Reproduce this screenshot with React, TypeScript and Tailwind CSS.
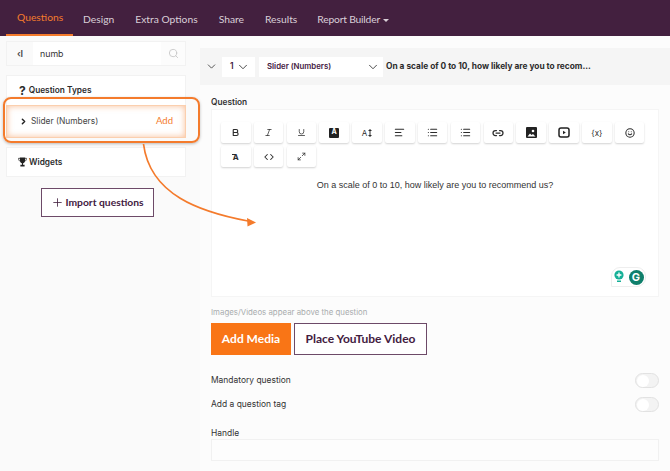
import React from "react";
import { ChevronDown, ChevronRight, Search, Bold, Italic, Underline, AlignLeft, List, Link2, Maximize2, Smile, Code, Plus } from "lucide-react";

const navItems = ["Design", "Extra Options", "Share", "Results"];

function Tool({ children }: { children: React.ReactNode }) {
  return (
    <div className="w-[29.5px] h-[21px] bg-white rounded-[2px] shadow-[0_1px_2px_rgba(0,0,0,0.18)] flex items-center justify-center text-[#2c2c2c]">
      {children}
    </div>
  );
}

function Toggle() {
  return (
    <div className="w-[24px] h-[15px] rounded-full bg-[#f3f3f3] border border-[#e2e2e2] flex items-center px-[1px]">
      <div className="w-[12px] h-[12px] rounded-full bg-white" />
    </div>
  );
}

export default function App() {
  const outfit = "font-['Lato','Noto_Sans',sans-serif]";
  return (
    <div className="relative w-[670px] h-[471px] overflow-hidden bg-white font-['Inter','Liberation_Sans',sans-serif] text-[#333]">
      <nav className={`h-[36px] bg-[#43203f] flex items-stretch pl-[6px] text-[10.3px] ${outfit}`}>
        <div className="px-[11px] pt-[2px] flex items-center text-[#f47b2c] border-b-2 border-[#f47b2c] w-[67px] whitespace-nowrap">Questions</div>
        <div className="flex items-center text-[#d9cfd8] gap-[21px] ml-[10px] pt-[4px]">
          {navItems.map((n) => <span key={n}>{n}</span>)}
          <span className="-ml-[1px] flex items-center gap-[3px] tracking-[-0.2px]">Report Builder<span className="w-0 h-0 border-x-[3px] border-x-transparent border-t-[3px] border-t-[#d9cfd8]" /></span>
        </div>
      </nav>

      <div className="flex h-[435px]">
        <aside className="w-[200px] shrink-0 bg-[#fafafa] px-[6px] pt-[5px]">
          <div className="h-[25px] w-[180px] flex bg-white border border-[#f2f2f2] items-center">
            <div className="w-[26px] h-full flex items-center justify-center text-[9px] font-semibold text-[#444] bg-[#fafafa]">‹I</div>
            <div className="flex-1 pl-[7px] text-[8.8px] text-[#333]">numb</div>
            <div className="w-[24px] h-full flex items-center justify-center bg-[#fcfcfc]"><Search size={11} className="text-[#c8c8c8]" /></div>
          </div>

          <div className="mt-[9px] w-[180px] bg-white border-t border-x border-[#f2f2f2]">
            <div className="h-[29px] pl-[12px] flex items-center gap-[3px] text-[8.3px] font-semibold text-[#2c2c2c]">
              <span className="text-[12px] font-bold leading-none">?</span>Question Types
            </div>
            <div className="h-[33px] -mx-px flex items-center pl-[12px] pr-[12px] bg-white border border-[#fbcfae] shadow-[inset_0_0_6px_rgba(244,123,44,0.5)] text-[8.4px] text-[#444]">
              <ChevronRight size={9} strokeWidth={4} className="text-[#222]" />
              <span className="ml-[3px] flex-1">Slider (Numbers)</span>
              <span className={`text-[#f47b2c] text-[9.5px] ${outfit}`}>Add</span>
            </div>
          </div>

          <div className="mt-[9px] w-[180px] h-[30px] bg-white border border-[#f2f2f2] pl-[11px] flex items-center gap-[2px] text-[8.3px] font-semibold text-[#2c2c2c]">
            <svg width="9" height="10" viewBox="0 0 9 10" fill="none">
              <path d="M2 0.5 H7 V3.5 C7 5.2 6 6.2 5 6.4 V7.8 H6.6 V9.5 H2.4 V7.8 H4 V6.4 C3 6.2 2 5.2 2 3.5 Z" fill="#222" />
              <path d="M2 1.3 H0.6 C0.6 3 1.1 3.9 2.4 4.3 M7 1.3 H8.4 C8.4 3 7.9 3.9 6.6 4.3" stroke="#222" strokeWidth="0.8" />
            </svg>
            Widgets
          </div>

          <button className={`mt-[11px] ml-[35px] w-[113px] h-[29px] bg-white border border-[#6d4a68] flex items-center justify-center gap-[1px] text-[10.3px] font-bold text-[#43203f] ${outfit}`}>
            <Plus size={13} strokeWidth={1.5} />Import questions
          </button>
        </aside>

        <main className="flex-1 bg-[#fcfcfc] pt-[12px]">
          <div className="h-[37px] w-[470px] bg-[#f5f5f5] flex items-center text-[9px]">
            <ChevronDown size={13} strokeWidth={1.5} className="ml-[5px] text-[#333]" />
            <div className="ml-[4px] w-[33px] h-[20px] bg-white flex items-center justify-between px-[8px] text-[8.5px] font-semibold text-[#43203f]">
              1<ChevronDown size={14} strokeWidth={1.5} className="-mr-[3px] text-[#333]" />
            </div>
            <div className="ml-[4px] w-[124px] h-[20px] bg-white flex items-center justify-between pl-[8px] pr-[3px] text-[7.8px] font-semibold text-[#43203f]">
              Slider (Numbers)<ChevronDown size={14} strokeWidth={1.5} className="text-[#333]" />
            </div>
            <span className="ml-[3px] text-[8.35px] font-bold text-[#2c2c2c] whitespace-nowrap">On a scale of 0 to 10, how likely are you to recom...</span>
          </div>

          <div className="pl-[11px] pr-[11px]">
            <div className="pt-[10px] text-[8.3px] font-semibold text-[#333] leading-[14px]">Question</div>
            <div className="relative h-[188px] bg-white border border-[#f5f5f5] px-[9px] pt-[12px]">
              <div className="flex flex-wrap gap-x-[3.33px] gap-y-[3px]">
                <Tool><Bold size={9} strokeWidth={3} /></Tool>
                <Tool><Italic size={9} /></Tool>
                <Tool><Underline size={9} /></Tool>
                <Tool><span className="w-[10px] h-[10px] bg-[#222] rounded-[1px] text-white text-[7px] font-bold flex items-center justify-center">A</span></Tool>
                <Tool>
                  <span className="text-[8px] flex items-center gap-[1px]">A
                    <svg width="4" height="8" viewBox="0 0 4 8" fill="#2c2c2c"><path d="M2 0 L4 2 H0 Z M2 8 L0 6 H4 Z M1.5 2 H2.5 V6 H1.5 Z" /></svg>
                  </span>
                </Tool>
                <Tool><AlignLeft size={11} strokeWidth={2.5} /></Tool>
                <Tool><List size={11} strokeWidth={2.5} /></Tool>
                <Tool><List size={11} strokeWidth={2.5} /></Tool>
                <Tool><Link2 size={12} strokeWidth={2.5} /></Tool>
                <Tool>
                  <svg width="11" height="11" viewBox="0 0 11 11"><rect width="11" height="11" rx="1" fill="#222" /><circle cx="7" cy="4" r="1.3" fill="#fff" /><path d="M1.5 9.5 L4 6.5 L5.5 8 L7 7 L9.5 9.5 Z" fill="#fff" /></svg>
                </Tool>
                <Tool>
                  <svg width="12" height="11" viewBox="0 0 12 11" fill="none"><rect x="1" y="1" width="10" height="9" rx="2" stroke="#222" strokeWidth="1.5" /><path d="M5 3.7 L7.8 5.5 L5 7.3 Z" fill="#222" /></svg>
                </Tool>
                <Tool><span className="text-[8px]">{"{x}"}</span></Tool>
                <Tool><Smile size={10} strokeWidth={2.5} /></Tool>
                <Tool>
                  <span className="relative text-[8px] font-bold leading-none">A<span className="absolute left-[-1px] top-[1px] w-[4px] h-[1px] bg-[#2c2c2c]" /></span>
                </Tool>
                <Tool><Code size={10} strokeWidth={2.5} /></Tool>
                <Tool><Maximize2 size={9} strokeWidth={2} /></Tool>
              </div>
              <p className="mt-[11px] text-center text-[9px] leading-[14px] text-[#333] font-['Liberation_Sans',sans-serif]">On a scale of 0 to 10, how likely are you to recommend us?</p>
              <div className="absolute right-[12px] bottom-[9px] w-[35px] h-[20px] bg-white border border-[#eee] rounded-tl-[9px] rounded-r-[9px] flex items-center justify-center gap-[5px]">
                <svg width="10" height="14" viewBox="0 0 10 14"><circle cx="5" cy="5" r="4.6" fill="#15b097" /><path d="M5 2.6 V7.4 M2.6 5 H7.4" stroke="#fff" strokeWidth="1.3" /><rect x="3" y="10.5" width="4" height="1.5" fill="#15b097" /></svg>
                <div className="w-[15px] h-[15px] rounded-full bg-[#0f7f6b] text-white text-[11px] font-bold flex items-center justify-center">G</div>
              </div>
            </div>

            <div className="mt-[9px] text-[7.85px] text-[#a9acae] leading-[12px]">Images/Videos appear above the question</div>
            <div className={`mt-[5px] flex gap-[3px] text-[12px] font-bold ${outfit}`}>
              <div className="w-[80px] h-[32px] bg-[#f97516] text-white flex items-center justify-center">Add Media</div>
              <div className="w-[133px] h-[32px] bg-white border border-[#6d4a68] text-[#43203f] flex items-center justify-center">Place YouTube Video</div>
            </div>

            <div className="mt-[18px] flex items-center justify-between h-[15px] text-[8.45px] text-[#333]">Mandatory question<Toggle /></div>
            <div className="mt-[9px] flex items-center justify-between h-[15px] text-[8.45px] text-[#333]">Add a question tag<Toggle /></div>
            <div className="mt-[15px] text-[8.45px] leading-[12px]">Handle</div>
            <div className="h-[22px] bg-[#fdfdfd] border border-[#f1f1f1]" />
          </div>
        </main>
      </div>

      <div className="absolute left-[3px] top-[97px] w-[197px] h-[46px] border-2 border-[#f47b2c] rounded-[8px] shadow-[0_1px_3px_rgba(0,0,0,0.25)]" />
      <svg className="absolute left-0 top-0 pointer-events-none" width="670" height="471" viewBox="0 0 670 471" fill="none">
        <path d="M143.5 144 C150 195 200 212 248 221" stroke="#f47b2c" strokeWidth="1.7" />
        <path d="M256 222.5 L247 218 L247.5 226.5 Z" fill="#f47b2c" />
      </svg>
    </div>
  );
}
